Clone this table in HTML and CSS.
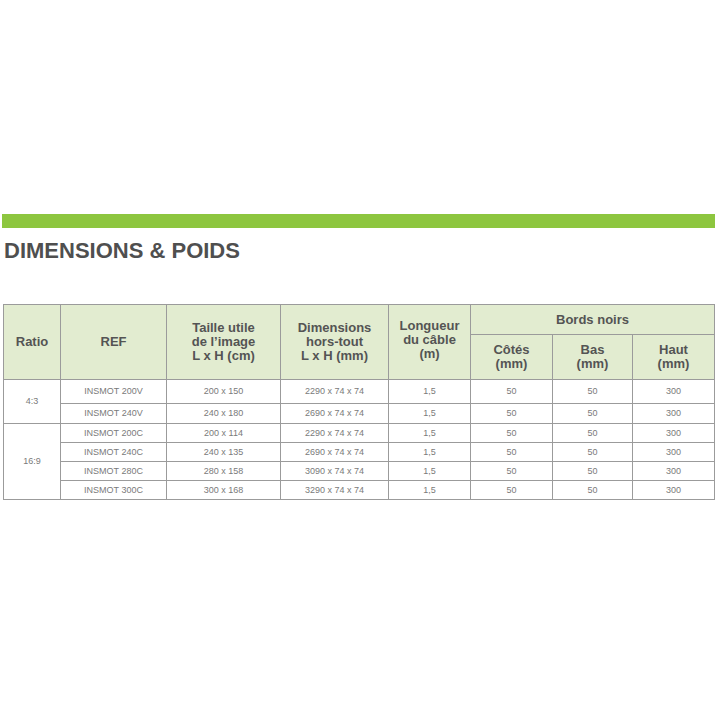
FILE: index.html
```html
<!DOCTYPE html>
<html lang="fr">
<head>
<meta charset="utf-8">
<title>Dimensions &amp; poids</title>
<link rel="stylesheet" href="styles.css">
</head>
<body>
<div class="page">
  <div class="bar"></div>
  <h2 class="title">DIMENSIONS &amp; POIDS</h2>
  <table class="specs">
    <colgroup>
      <col class="c-ratio"><col class="c-ref"><col class="c-taille"><col class="c-dim">
      <col class="c-long"><col class="c-cote"><col class="c-bas"><col class="c-haut">
    </colgroup>
    <thead>
      <tr class="h1">
        <th rowspan="2">Ratio</th>
        <th rowspan="2">REF</th>
        <th rowspan="2">Taille utile<br>de l’image<br>L x H (cm)</th>
        <th rowspan="2">Dimensions<br>hors-tout<br>L x H (mm)</th>
        <th rowspan="2" class="up">Longueur<br>du câble<br>(m)</th>
        <th colspan="3">Bords noirs</th>
      </tr>
      <tr class="h2">
        <th>Côtés<br>(mm)</th>
        <th>Bas<br>(mm)</th>
        <th>Haut<br>(mm)</th>
      </tr>
    </thead>
    <tbody>
      <tr class="r-first">
        <td rowspan="2">4:3</td>
        <td>INSMOT 200V</td><td>200 x 150</td><td>2290 x 74 x 74</td><td>1,5</td><td>50</td><td>50</td><td>300</td>
      </tr>
      <tr class="r-second">
        <td>INSMOT 240V</td><td>240 x 180</td><td>2690 x 74 x 74</td><td>1,5</td><td>50</td><td>50</td><td>300</td>
      </tr>
      <tr class="r">
        <td rowspan="4">16:9</td>
        <td>INSMOT 200C</td><td>200 x 114</td><td>2290 x 74 x 74</td><td>1,5</td><td>50</td><td>50</td><td>300</td>
      </tr>
      <tr class="r">
        <td>INSMOT 240C</td><td>240 x 135</td><td>2690 x 74 x 74</td><td>1,5</td><td>50</td><td>50</td><td>300</td>
      </tr>
      <tr class="r">
        <td>INSMOT 280C</td><td>280 x 158</td><td>3090 x 74 x 74</td><td>1,5</td><td>50</td><td>50</td><td>300</td>
      </tr>
      <tr class="r">
        <td>INSMOT 300C</td><td>300 x 168</td><td>3290 x 74 x 74</td><td>1,5</td><td>50</td><td>50</td><td>300</td>
      </tr>
    </tbody>
  </table>
</div>
</body>
</html>
```

FILE: styles.css
```css
html, body {
  margin: 0;
  padding: 0;
  background: #ffffff;
}

.page {
  padding-top: 214px;
  font-family: "Liberation Sans", Arial, sans-serif;
}

.bar {
  margin-left: 2px;
  width: 713px;
  height: 14px;
  background: #8dc63f;
}

.title {
  margin: 10px 0 0 4px;
  height: 26px;
  font-size: 22px;
  line-height: 26px;
  font-weight: bold;
  color: #4f4f4f;
}

.specs {
  margin: 40px 0 0 3px;
  width: 711px;
  table-layout: fixed;
  border-collapse: collapse;
}

.c-ratio { width: 57px; }
.c-ref { width: 106px; }
.c-taille { width: 114px; }
.c-dim { width: 108px; }
.c-long { width: 82px; }
.c-cote { width: 82px; }
.c-bas { width: 80px; }
.c-haut { width: 82px; }

.specs th,
.specs td {
  border: 1px solid #9b9b9b;
  padding: 0;
  text-align: center;
  vertical-align: middle;
}

.specs th {
  background: #e2ecd0;
  color: #545454;
  font-size: 13px;
  line-height: 14px;
  font-weight: bold;
}

.specs th.up {
  padding-bottom: 4px;
}

.specs td {
  color: #7a7a7a;
  font-size: 9px;
  line-height: 11px;
}

.h1 { height: 30px; }
.h2 { height: 45px; }
.r-first { height: 24px; }
.r-second { height: 20px; }
.r { height: 19px; }
```
